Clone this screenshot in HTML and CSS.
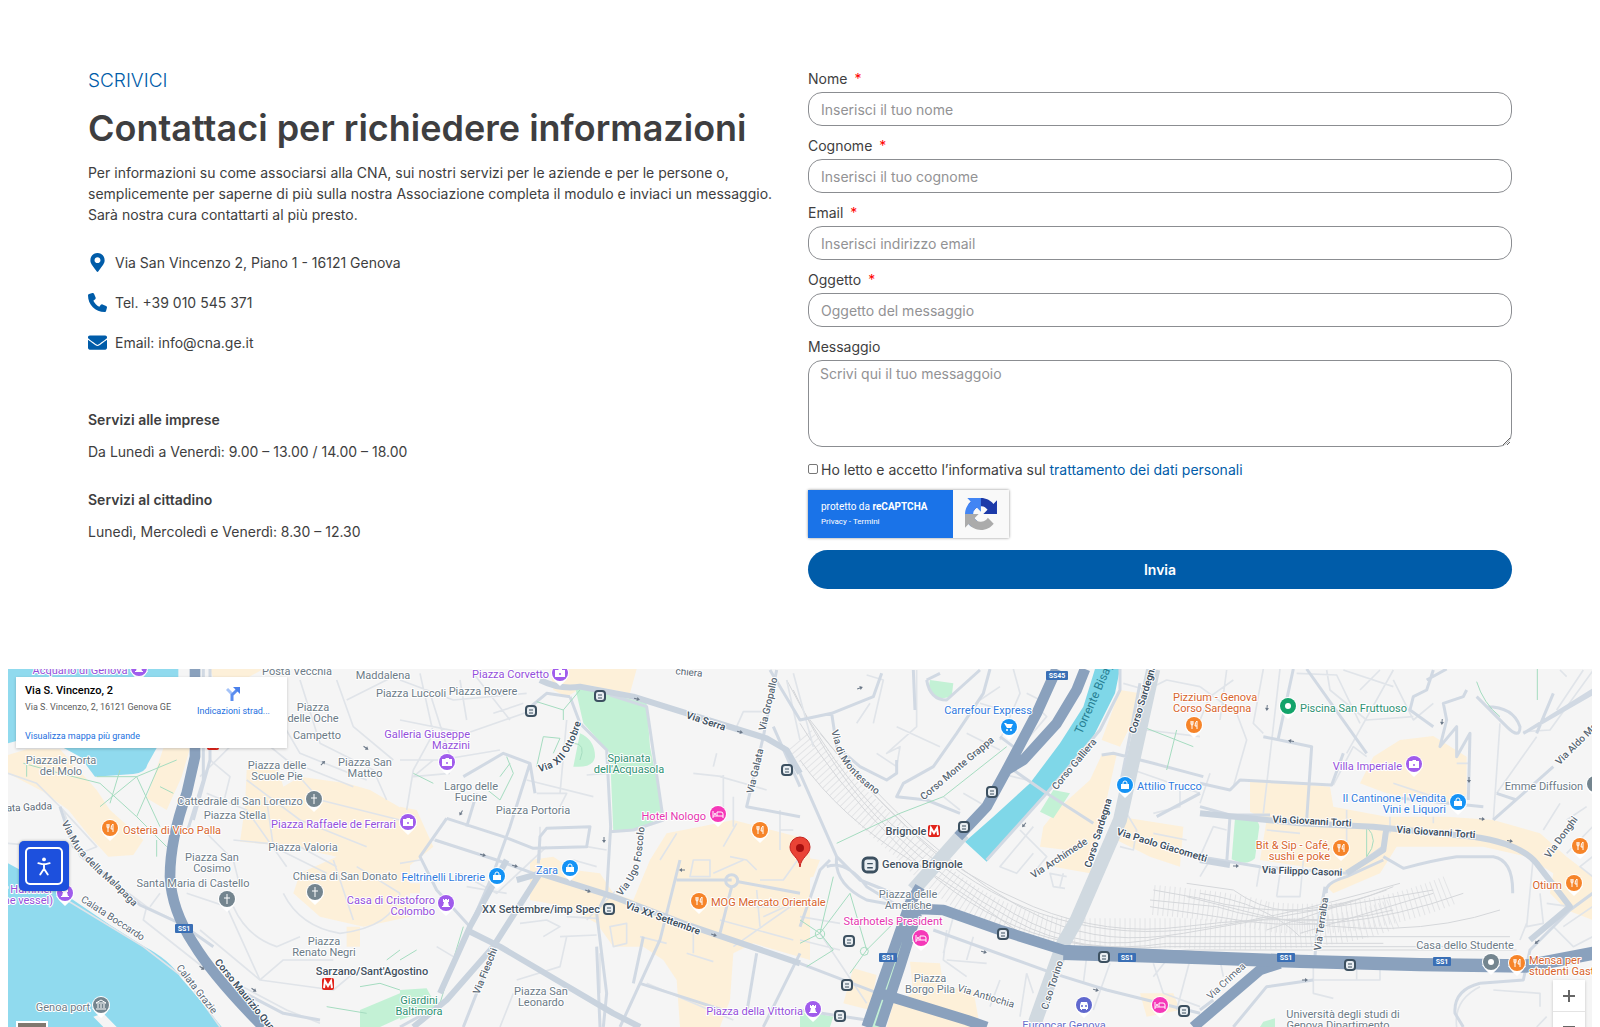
FILE: index.html
```html
<!DOCTYPE html>
<html lang="it">
<head>
<meta charset="utf-8">
<meta name="viewport" content="width=device-width, initial-scale=1">
<title>Contatti</title>
<link rel="stylesheet" href="styles.css">
</head>
<body>
<main class="contact">
  <section class="info">
    <p class="kicker">SCRIVICI</p>
    <h1 class="title">Contattaci per richiedere informazioni</h1>
    <p class="intro">Per informazioni su come associarsi alla CNA, sui nostri servizi per le aziende e per le persone o, semplicemente per saperne di più sulla nostra Associazione completa il modulo e inviaci un messaggio. Sarà nostra cura contattarti al più presto.</p>
    <ul class="contacts">
      <li><svg class="contact-icon" viewBox="-64 0 512 512" aria-hidden="true"><path d="M172.268 501.67C26.97 291.031 0 269.413 0 192 0 85.961 85.961 0 192 0s192 85.961 192 192c0 77.413-26.97 99.031-172.268 309.67-9.535 13.774-29.93 13.773-39.464 0zM192 272c44.183 0 80-35.817 80-80s-35.817-80-80-80-80 35.817-80 80 35.817 80 80 80z"/></svg><span>Via San Vincenzo 2, Piano 1 - 16121 Genova</span></li>
      <li><svg class="contact-icon" viewBox="0 0 512 512" aria-hidden="true"><path d="M164.9 24.6c-7.7-18.6-28-28.5-47.4-23.2l-88 24C12.1 30.2 0 46 0 64C0 311.4 200.6 512 448 512c18 0 33.8-12.1 38.6-29.5l24-88c5.3-19.4-4.6-39.7-23.2-47.4l-96-40c-16.3-6.8-35.2-2.1-46.3 11.6L304.7 368C234.3 334.7 177.3 277.7 144 207.3L193.3 167c13.7-11.2 18.4-30 11.6-46.3l-40-96z"/></svg><span>Tel. +39 010 545 371</span></li>
      <li><svg class="contact-icon" viewBox="0 0 512 512" aria-hidden="true"><path d="M502.3 190.8c3.9-3.1 9.7-.2 9.7 4.7V400c0 26.5-21.5 48-48 48H48c-26.5 0-48-21.5-48-48V195.6c0-5 5.7-7.8 9.7-4.7 22.4 17.4 52.1 39.5 154.1 113.6 21.1 15.4 56.7 47.8 92.2 47.6 35.7.3 72-32.8 92.3-47.6 102-74.1 131.6-96.3 154-113.7zM256 320c23.2.4 56.6-29.2 73.4-41.4 132.7-96.3 142.8-104.7 173.4-128.7 5.8-4.5 9.2-11.5 9.2-18.9v-19c0-26.5-21.5-48-48-48H48c-26.5 0-48 21.5-48 48v19c0 7.4 3.4 14.3 9.2 18.9 30.6 23.9 40.7 32.4 173.4 128.7 16.8 12.2 50.2 41.8 73.4 41.4z"/></svg><span>Email: info@cna.ge.it</span></li>
    </ul>
    <div class="hours">
      <h2>Servizi alle imprese</h2>
      <p>Da Lunedì a Venerdì: 9.00 – 13.00 / 14.00 – 18.00</p>
      <h2>Servizi al cittadino</h2>
      <p>Lunedì, Mercoledì e Venerdì: 8.30 – 12.30</p>
    </div>
  </section>

  <form class="form">
    <div class="field"><label class="required" for="nome">Nome</label><input id="nome" type="text" placeholder="Inserisci il tuo nome"></div>
    <div class="field"><label class="required" for="cognome">Cognome</label><input id="cognome" type="text" placeholder="Inserisci il tuo cognome"></div>
    <div class="field"><label class="required" for="email">Email</label><input id="email" type="email" placeholder="Inserisci indirizzo email"></div>
    <div class="field"><label class="required" for="oggetto">Oggetto</label><input id="oggetto" type="text" placeholder="Oggetto del messaggio"></div>
    <div class="field"><label for="messaggio">Messaggio</label><textarea id="messaggio" placeholder="Scrivi qui il tuo messaggoio"></textarea></div>
    <div class="consent"><input id="consenso" type="checkbox"><label for="consenso">Ho letto e accetto l’informativa sul <a href="#privacy">trattamento dei dati personali</a></label></div>
    <div class="captcha">
      <div class="captcha-text"><p>protetto da <strong>reCAPTCHA</strong></p><p class="captcha-links"><a href="#privacy">Privacy</a> - <a href="#termini">Termini</a></p></div>
      <div class="captcha-logo"><svg viewBox="0 0 64 64" aria-hidden="true"><path fill="#1c3aa9" d="M64 31.955l-.033-1.37V4.687l-7.16 7.16C50.948 4.674 42.033.093 32.05.093c-10.4 0-19.622 4.96-25.458 12.64l11.736 11.86a15.55 15.55 0 0 1 4.754-5.334c2.05-1.6 4.952-2.906 8.968-2.906.485 0 .86.057 1.135.163 4.976.393 9.288 3.14 11.828 7.124l-8.307 8.307L64 31.953"/><path fill="#4285f4" d="M31.862.094l-1.37.033H4.594l7.16 7.16C4.58 13.147 0 22.06 0 32.046c0 10.4 4.96 19.622 12.64 25.458L24.5 45.768a15.55 15.55 0 0 1-5.334-4.754c-1.6-2.05-2.906-4.952-2.906-8.968 0-.485.057-.86.163-1.135.393-4.976 3.14-9.288 7.124-11.828l8.307 8.307L31.86.095"/><path fill="#ababab" d="M.001 32.045l.033 1.37v25.898l7.16-7.16c5.86 7.173 14.774 11.754 24.76 11.754 10.4 0 19.622-4.96 25.458-12.64l-11.736-11.86a15.55 15.55 0 0 1-4.754 5.334c-2.05 1.6-4.952 2.906-8.968 2.906-.485 0-.86-.057-1.135-.163-4.976-.393-9.288-3.14-11.828-7.124l8.307-8.307c-10.522.04-22.4.066-31.295-.005"/></svg></div>
    </div>
    <button class="submit" type="submit">Invia</button>
  </form>
</main>

<section class="map" aria-label="Mappa">
<svg class="map-canvas" viewBox="8 669 1584 358" preserveAspectRatio="xMinYMin slice">
  <defs>
    <g id="pin"><path d="M-9 3Q-6 8 0 13Q6 8 9 3Z" fill="#fff"/><circle r="9" fill="#fff"/><circle r="8" fill="currentColor"/></g>
    <g id="food"><use href="#pin"/><path fill="none" stroke="#fff" d="M-3-4v3q0 1 1 1t1-1v-3M-2-4v8M3 4v-8q-2 1-2 5h2"/></g>
    <g id="camera"><use href="#pin"/><path fill="#fff" d="M-5-3h3l1-1h3v1h3v7H-5z"/><circle cy="1" r="1" fill="currentColor"/></g>
    <g id="tower"><use href="#pin"/><path fill="#fff" d="M-3-4h1v1h1v-1h2v1h1v-1h1v3h-1l1 4h1v1h-8v-1h1l1-4h-1z"/></g>
    <g id="bag"><use href="#pin"/><path fill="#fff" d="M-4-1h8v5h-8z"/><path fill="none" stroke="#fff" d="M-2-1v-1a2 2 0 0 1 4 0v1"/></g>
    <g id="cross"><use href="#pin"/><path stroke="#fff" d="M0-5V5M-3-1H3"/></g>
    <g id="bed"><use href="#pin"/><path fill="none" stroke="#fff" d="M-5-3v7M-5 2h10M5 4v-4q0-2-2-2h-4v4"/><circle cx="-3" cy="0" r="1" fill="#fff"/></g>
    <g id="dot"><use href="#pin"/><circle r="3" fill="#fff"/></g>
    <g id="cart"><use href="#pin"/><path fill="#fff" d="M-5-4h2l1 1h6l-2 4h-4z"/><circle cx="-2" cy="3" r="1" fill="#fff"/><circle cx="2" cy="3" r="1" fill="#fff"/></g>
    <g id="museum"><use href="#pin"/><path fill="none" stroke="#fff" d="M-5-2h10L0-5zM-3-1v4M0-1v4M3-1v4M-5 4H5"/></g>
    <g id="car"><use href="#pin"/><path fill="#fff" d="M-4 0l1-3h6l1 3v4h-1v1h-1v-1h-4v1h-1v-1h-1z"/><circle cx="-2" cy="1" r="1" fill="currentColor"/><circle cx="2" cy="1" r="1" fill="currentColor"/></g>
    <g id="station"><rect x="-5" y="-5" width="10" height="10" rx="3" fill="#e9eef2" stroke="#3c5060" stroke-width="2"/><path stroke="#3c5060" d="M-2-1H2M-2 2H2"/></g>
    <g id="metro"><rect x="-6" y="-6" width="12" height="12" rx="2" fill="#e2231a"/><path fill="none" stroke="#fff" stroke-width="2" d="M-4 4l1-7 3 5 3-5 1 7"/></g>
    <g id="ss1"><rect x="-9" y="-5" width="18" height="9" rx="1" fill="#3a6fb5"/><text class="shield">SS1</text></g>
    <path id="arrow" fill="#6b7888" d="M6 0L0-4v3h-6v2h6v3z"/>
    <path id="ottobre" d="M538 768Q559 764 566 748Q574 735 579 714"/>
    <path id="foscolo" d="M618 894Q637 872 638 850L641 822"/>
    <path id="mura" d="M65 821L78 846Q100 872 116 883L140 908"/>
    <path id="montesano" d="M835 730L841 751Q853 775 883 794"/>
  </defs>

  <g transform="scale(.33333) translate(0 1980)">
    <!-- commercial areas -->
    <g class="urban">
      <path d="M24 285L80 268H180L290 390 330 450 430 540 400 585 325 590 270 530 205 450 130 395 24 340ZM490 265H570L545 350 500 450 440 415ZM630 27H790L740 55H640ZM740 330L830 310 850 380 900 350 1040 370 1110 390 1230 460V770L1090 800 960 770 880 700 900 640 1010 590 880 560 720 545 735 440ZM1040 800H1080V860H1040Z"/>
      <g transform="translate(1200)"><path d="M450 27H710L690 100 560 75 500 110 460 90ZM0 440L50 450 100 560 0 640ZM390 600L460 590 520 630 600 640 640 700 700 720 750 600 800 520 900 500 1000 480 1230 540V900L1060 850 1000 880 990 1020 960 1101H840L830 960 790 900 730 860 640 860 590 790 500 740 390 720ZM0 670H60V700H0Z"/></g>
      <g transform="translate(2400)"><path d="M0 590L60 600 40 650 0 660ZM960 90L1020 100 990 200 960 260 905 240ZM905 285L950 285 870 640 760 620 800 570 720 560 730 500 770 450 870 360ZM960 470L1150 500 1140 620 1050 590 950 540ZM330 905L420 910 430 980 520 990 540 1101H260L280 1030 340 1000ZM160 925L230 945 210 1050 130 1030ZM1020 1000H1120L1140 1050 1040 1070Z"/></g>
      <g transform="translate(3600)"><path d="M150 360L390 380 400 440 560 470H740L880 480 1020 520 1100 590 1178 650V780L1100 750 1050 700 1060 640 980 590 850 560 590 560 540 640 400 700 380 680 440 640 180 600 200 480 150 455ZM520 290L600 240 700 228 800 290 800 400 780 440 560 400 480 370Z"/></g>
    </g>
    <!-- water -->
    <path class="water" d="M24 27H535V60H24ZM24 50H60V240L24 250ZM175 255L240 290 285 350 400 342Q438 338 443 312L475 255ZM24 610L190 700 330 795 430 858Q510 900 540 950L600 1020 665 1101H350L310 1060 280 1070 310 1101H24Z"/>
    <g transform="translate(2400)"><path class="river" d="M885 27H960L945 100 880 230 720 420 560 605 495 545 580 470 690 370 780 250 850 140Z"/></g>
    <!-- parks -->
    <g class="park">
      <path d="M1080 1050L1200 1000 1230 1060 1140 1101H1080Z"/>
      <g transform="translate(1200)"><path d="M525 80L620 100 740 130 750 260 790 460 740 500 640 517 630 280 550 190ZM540 220Q585 240 585 290 580 325 520 320ZM0 990L80 985 110 1040 0 1080Z"/></g>
      <g transform="translate(2400)"><path d="M390 60L460 70 455 110 410 118 385 90ZM760 390L810 400 760 475 720 455ZM290 800L330 810 240 1101H215ZM0 1050L100 1070 90 1101H0Z"/></g>
      <g transform="translate(3600)"><path d="M105 475Q175 465 178 500L165 595Q140 620 95 598ZM190 1085L225 1075V1101H180Z"/></g>
    </g>
    <!-- railway yards -->
    <g class="ties"><path d="M2400 240Q2560 430 2720 560Q2950 810 3230 820H3560Q4000 840 4180 760"/><path d="M3460 720Q3700 740 3800 770Q4080 800 4350 690"/></g>
    <g class="rail" transform="translate(2400)"><path d="M-40 60Q100 330 260 480T640 760 1100 830H1700M-20 90Q100 350 270 510T640 780 1100 850H1750M0 190Q100 360 280 540T650 800 1100 860H2000M30 180Q160 350 320 500T700 740 1150 800 1600 780M60 220Q180 370 350 530T720 760 1150 810 1800 670M100 240Q200 380 380 540T740 780 1150 820 1900 690M0 300Q120 470 330 600T660 820 1160 870H2150M1060 690L1200 715Q1500 800 1780 680M1050 720L1250 740Q1500 820 1780 750M1050 740L1250 770Q1600 840 1990 700M1160 670L1300 690Q1450 800 1660 720M1160 710L1400 770Q1800 850 2100 750M1200 700Q1400 730 1500 830H2130M1400 810L1760 690M1500 820L1900 700"/></g>
    <!-- small streets -->
    <g class="lane">
      <path d="M24 340L110 370 190 450 240 590 440 740 540 790M440 740L430 780 620 930M180 440L290 560 240 580M600 350L700 250 760 60M620 400L740 450 860 620M630 300L690 350 670 430M600 500L700 600 720 680M700 170L860 300 1060 380M740 360L900 480 1100 560M830 160L900 280 1100 360M900 60L960 250 1120 330 1160 420M1010 60L1060 200 1180 300M1040 120L1200 40M880 330L960 420 1200 480M800 420L820 560 980 640M700 540L900 560 1010 620M560 700L680 740 780 960 850 900 1000 900M600 810L780 960 1000 990 1060 940M850 700Q900 800 1020 820 1180 800 1200 700M700 740Q740 830 830 860L900 830M1000 600L1060 780M1070 620L1200 700M660 1101L560 960 430 860 200 720M690 960L860 1050 960 1090M24 550L140 560M480 700L450 740"/>
      <g transform="translate(1200)"><path d="M0 60L160 120 380 100M0 180L200 220 400 150M60 40L100 220 40 330 20 450M180 60L200 180M220 40L330 180M0 300L120 300 300 270M90 100L160 320M280 160L370 130M100 300L40 350 150 340M410 400H500L480 440M480 400L500 180M380 360L580 410M560 345L620 340M100 540L260 590M180 640L290 700 440 560M320 700L200 680M420 500V600M560 560L620 570M500 770L590 775M480 830L590 825M350 960L480 920 500 830M360 790L440 780 480 800 430 830M630 800L640 860 680 850 680 790ZM600 880V1000M740 970L1000 1080M860 880L940 905M880 820V880M960 780L1180 840M1000 860L1200 720M940 640L1030 600M880 600H930V650H870ZM990 590L1040 600 1070 630M1010 490L970 560M1000 410V500M880 340L970 350M970 345V450M960 350L1100 390M950 280L940 320M830 520L780 600M60 600L0 610M110 860L160 890M300 1101L340 1000M590 620L520 600M560 780L650 690M720 830L800 850M1200 590L1150 660 1080 660M1140 450V570M1140 510H1180M1010 200L1030 155H1090M1160 60L1200 240M1180 40L1240 260M1070 690L1080 800M1090 770L1200 720M1060 740H1140"/></g>
      <g transform="translate(2400)"><path d="M200 45L250 60 220 190M170 190L210 130M350 30V200L260 280 300 260 290 320 230 280M640 27L660 100 600 240M680 100L740 130M640 160L540 130M290 200L420 260M430 410L480 450M680 360L600 340M490 400L560 440M700 500L600 620 650 640 700 580M660 510L740 590 700 640M800 650L750 640 760 680 795 685M970 70L1040 90 1100 60 1200 80M1040 210L1200 230M1000 330L1200 400M1060 460L1140 440 1140 370M960 560L1000 570 1010 510 980 460M1060 520L1160 540M440 810L430 900 500 950M440 900L560 910M600 960L570 1040M680 940L660 1070M520 830L500 900M460 770L430 880M860 890L850 970M930 910L880 1050M1060 950L1100 900M1170 900L1130 1050M1060 910L1090 1000 1200 1040M0 840L120 870M60 820L200 1030M0 770L120 790M700 1000L680 940M720 150L740 170 680 240M600 80L540 120M500 220L600 270M780 680L790 640"/></g>
      <g transform="translate(3600)"><path d="M0 80L110 160 140 240 100 380M80 30L60 180M190 27L160 190 190 220M240 27L190 460M290 40L410 45 480 190M380 30L390 90 500 180 640 170M540 30L480 90M580 60L640 180 700 130M430 30L580 80M900 190L880 480M1010 230L890 400M1080 30L1100 50M1180 30L1050 210 970 215M1150 30L1070 150M1080 430L1030 510M1160 440L1100 480M1000 590L980 800 1030 790 1020 700M980 790L960 840M1060 800L1120 860 1178 830M1040 730L1110 740M1090 800L1178 740M440 450V560M570 470V520M700 470V490M200 510L300 520M0 590L40 500 80 510M230 710H300L310 600M240 640L230 710M180 620L170 680M60 900L70 950M0 650L30 600M340 960H540V930M340 900V1000L400 1015M470 930V960M400 375L460 260 500 290M440 280L580 30M580 370L700 410M770 310H810M840 980Q760 1020 770 1101M880 990L1020 1000V1040M1040 1070L1010 1101M0 180L30 110 100 60M0 430L30 340M1178 590L1140 620 1178 650M1100 580L1178 500"/></g>
    </g>
    <!-- streets -->
    <g class="street">
      <path d="M610 27V360L560 520M630 27V300L580 480M180 440L220 560 420 735 540 790 640 860M640 950L850 1060 960 1080"/>
      <g transform="translate(1200)"><path d="M510 110L540 190 620 270 632 500 620 700 590 760 620 1000 610 1101M190 350L310 280 390 310 405 400M390 310L330 500 280 640 210 800M140 475L310 530 400 565 560 560 570 500 440 505 420 530 415 610M140 475L60 590 110 690 210 800M105 540L290 600 400 640M630 515L700 510 790 480 740 140 630 105M1200 470L1040 440 1090 230 1130 30M1090 230L1150 260 1200 340M840 600L780 840 660 1101M995 660H830M995 680L960 820M1015 665L1200 700M1200 380L1120 200M1200 880L1090 1101M730 830L700 970M1070 880L1040 1060M200 500L230 400M380 150L440 100 510 110M0 1101L130 1030M590 860L600 1101M190 1101L285 860M720 970L1000 1060"/><circle cx="995" cy="662" r="18"/></g>
      <g transform="translate(2400)"><path d="M-90 30L0 180 95 160 110 260 180 320 260 360 290 340 290 300M95 160L220 110 245 40M340 30L345 150M570 27L550 100 470 220 400 320 310 370 290 410 380 420 480 460M380 60Q390 120 440 120L540 30M380 60L420 40M960 27V90L900 210 740 400 560 600M640 260L600 230M0 340L110 590 180 660 330 720M90 600L60 630 0 800M80 620Q140 600 200 680L330 760M110 590Q100 670 200 720L310 740M640 330L740 400 880 490M905 285L940 280 1060 310 1210 350M1200 400L1070 470M400 810L760 940 920 990 1200 1060M0 910L260 1010M0 1050L200 1080M960 380L1020 70"/></g>
      <g transform="translate(3600)"><path d="M320 27L500 280M280 27L235 235M190 230L335 260 320 480M0 370L90 390 120 360 395 375 430 280M700 30L680 90 640 110 630 150 700 200M800 90L790 110 730 130 740 180 720 260 770 200 770 290 810 220 805 420M880 480L1060 320M740 27L680 60M970 220L1180 100M830 110L920 200Q960 240 960 200 940 140 860 140M1010 220L1060 100M550 590L610 625Q700 600 770 590H880Q940 600 938 700M380 700Q370 670 440 650L550 600M345 890L350 820 375 680M0 590L180 620 440 640 550 560 555 500M90 470L80 610M90 465H210M0 440L90 465M1178 90L970 220M890 400L950 420M850 440L560 410M840 970Q760 990 765 1060L790 1101M840 970L970 960 990 870 1110 750M100 1101L200 980 340 960 M0 1050L40 1020M1110 750L1178 700"/></g>
    </g>
    <!-- footpaths -->
    <g class="path">
      <path d="M70 310L180 340 300 370 410 470 500 560M290 350L410 350 530 300M410 350L300 440M360 330L330 430M410 350L480 500M480 310L410 470M480 380L520 400M470 540V590M80 310V350M1080 980L1140 970 1200 990M980 1040L1100 1060M1200 870L1160 900"/>
      <g transform="translate(1200)"><path d="M410 125L490 150 540 90M490 150V180M410 320L430 230 480 235 460 280M320 290L340 340 300 420 250 380M330 310L300 350M520 250Q560 250 540 300M190 800L120 1030M40 340L100 370M0 900L50 870"/></g>
      <g transform="translate(2400)"><path d="M0 780L60 820 100 870 20 920M60 820L150 700 200 870M60 820L0 850M200 870L150 940M200 870L280 790M100 650L60 820M110 550L300 460 430 410 620 260M1040 205L1180 260M1130 210L1100 330"/><circle cx="60" cy="822" r="14"/><circle cx="193" cy="874" r="12"/></g>
      <g transform="translate(3600)"><path d="M1012 27V120M830 65Q850 130 900 170M500 500Q540 540 500 590V500"/></g>
    </g>
    <!-- avenues -->
    <g class="avenue">
      <path d="M1620 60Q1680 90 1740 80L1900 110 2300 235 2360 270 2400 340"/>
      <path d="M1550 660L1620 640 1840 710 2050 790 2400 910M1620 640L1480 860 1340 1020 1240 1101M1400 810L1500 860 1840 1060 1920 1101M1520 600L1410 800 1320 1000"/>
      <path d="M3600 460L3900 490 4120 500 4420 530Q4560 550 4610 610L4710 740 4590 840M4160 500L4150 570 4040 640M3600 600L3690 615"/>
    </g>
    <g class="boulevard"><path d="M3460 27L3360 480 3230 780 3190 850 3100 1101"/><path d="M2890 520L2740 690"/></g>
    <!-- highways -->
    <g class="highway">
      <path d="M585 27V290L560 400Q510 540 510 650Q515 750 580 850Q640 950 790 1101"/>
      <path d="M3170 27L3110 160 3020 330 2960 440 2875 530M3255 27L3230 90 3170 190 3070 300 3020 330M2760 680L2730 730 2600 1101M2750 760L2700 920 2640 1101M2720 745L2830 750 3000 810 3190 870 3600 890M2640 1000L2900 1080 2960 1101M3840 910L3780 930 3580 1101"/>
      <path class="wide" d="M3190 880L3600 893 3900 904 4260 914 4580 918 4780 880"/>
    </g>
  </g>

  <g class="arrows">
    <use href="#arrow" transform="translate(366 748) rotate(35) scale(.5)"/><use href="#arrow" transform="translate(323 763) rotate(-45) scale(.5)"/><use href="#arrow" transform="translate(202 968) rotate(35) scale(.5)"/><use href="#arrow" transform="translate(254 990) rotate(35) scale(.5)"/><use href="#arrow" transform="translate(637 699) rotate(15) scale(.5)"/><use href="#arrow" transform="translate(740 732) rotate(15) scale(.5)"/><use href="#arrow" transform="translate(515 866) rotate(15) scale(.5)"/><use href="#arrow" transform="translate(588 891) rotate(20) scale(.5)"/><use href="#arrow" transform="translate(483 855) rotate(15) scale(.5)"/><use href="#arrow" transform="translate(604 840) rotate(90) scale(.5)"/><use href="#arrow" transform="translate(461 813) rotate(120) scale(.5)"/><use href="#arrow" transform="translate(714 935) rotate(18) scale(.5)"/><use href="#arrow" transform="translate(682 870) rotate(180) scale(.5)"/><use href="#arrow" transform="translate(860 688) rotate(-20) scale(.5)"/><use href="#arrow" transform="translate(984 952) rotate(16) scale(.5)"/><use href="#arrow" transform="translate(1096 990) rotate(16) scale(.5)"/><use href="#arrow" transform="translate(1024 825) rotate(130) scale(.5)"/><use href="#arrow" transform="translate(1291 741) rotate(190) scale(.5)"/><use href="#arrow" transform="translate(1267 708) rotate(95) scale(.5)"/><use href="#arrow" transform="translate(1442 722) rotate(95) scale(.5)"/><use href="#arrow" transform="translate(1469 780) rotate(90) scale(.5)"/><use href="#arrow" transform="translate(1482 819) rotate(5) scale(.5)"/><use href="#arrow" transform="translate(1510 841) rotate(10) scale(.5)"/><use href="#arrow" transform="translate(1236 866) scale(.5)"/><use href="#arrow" transform="translate(1305 980) scale(.5)"/><use href="#arrow" transform="translate(1537 942) rotate(140) scale(.5)"/>
  </g>

  <g class="labels">
    <g class="place">
      <text x="297" y="671">Posta Vecchia</text><text x="313" y="707">Piazza</text><text x="313" y="718">delle Oche</text><text x="317" y="735">Campetto</text>
      <text x="61" y="760">Piazzale Porta</text><text x="61" y="771">del Molo</text><text x="212" y="857">Piazza San</text><text x="212" y="868">Cosimo</text>
      <text x="193" y="883">Santa Maria di Castello</text><text x="277" y="765">Piazza delle</text><text x="277" y="776">Scuole Pie</text><text x="365" y="762">Piazza San</text><text x="365" y="773">Matteo</text>
      <text x="240" y="801">Cattedrale di San Lorenzo</text><text x="235" y="815">Piazza Stella</text><text x="303" y="847">Piazza Valoria</text><text x="345" y="876">Chiesa di San Donato</text>
      <text x="324" y="941">Piazza</text><text x="324" y="952">Renato Negri</text><text x="63" y="1007">Genoa port</text><text x="383" y="675">Maddalena</text><text x="411" y="693">Piazza Luccoli</text><text x="483" y="691">Piazza Rovere</text>
      <text x="471" y="786">Largo delle</text><text x="471" y="797">Fucine</text><text x="533" y="810">Piazza Portoria</text><text x="541" y="991">Piazza San</text><text x="541" y="1002">Leonardo</text>
      <text x="908" y="894">Piazza delle</text><text x="908" y="905">Americhe</text><text x="930" y="978">Piazza</text><text x="930" y="989">Borgo Pila</text>
      <text x="1544" y="786">Emme Diffusion</text><text x="1465" y="945">Casa dello Studente</text><text x="1343" y="1014">Università degli studi di</text><text x="1338" y="1025">Genova Dipartimento</text>
    </g>
    <g class="place violet">
      <text x="80" y="670">Acquario di Genova</text><text class="end" x="53" y="889">r Hammer</text><text class="end" x="53" y="900">he vessel)</text><text class="end" x="396" y="824">Piazza Raffaele de Ferrari</text>
      <text class="end" x="435" y="900">Casa di Cristoforo</text><text class="end" x="435" y="911">Colombo</text><text class="end" x="549" y="674">Piazza Corvetto</text><text class="end" x="470" y="734">Galleria Giuseppe</text><text class="end" x="470" y="745">Mazzini</text>
      <text class="end" x="803" y="1011">Piazza della Vittoria</text><text class="end" x="1402" y="766">Villa Imperiale</text>
    </g>
    <g class="place orange">
      <text class="start" x="123" y="830">Osteria di Vico Palla</text><text class="start" x="711" y="902">MOG Mercato Orientale</text><text class="start" x="1173" y="697">Pizzium - Genova</text><text class="start" x="1173" y="708">Corso Sardegna</text>
      <text class="end" x="1330" y="845">Bit &amp; Sip - Café,</text><text class="end" x="1330" y="856">sushi e poke</text><text class="end" x="1562" y="885">Otium</text><text class="start" x="1529" y="960">Mensa per</text><text class="start" x="1529" y="971">studenti Gastr</text>
    </g>
    <g class="place green"><text x="629" y="758">Spianata</text><text x="629" y="769">dell'Acquasola</text><text x="419" y="1000">Giardini</text><text x="419" y="1011">Baltimora</text><text class="start" x="1300" y="708">Piscina San Fruttuoso</text></g>
    <g class="place pink"><text class="end" x="706" y="816">Hotel Nologo</text><text x="893" y="921">Starhotels President</text></g>
    <g class="place blue"><text class="end" x="485" y="877">Feltrinelli Librerie</text><text class="end" x="558" y="870">Zara</text><text x="988" y="710">Carrefour Express</text><text class="start" x="1137" y="786">Attilio Trucco</text><text class="end" x="1446" y="798">Il Cantinone | Vendita</text><text class="end" x="1446" y="809">Vini e Liquori</text></g>
    <g class="place indigo"><text x="1064" y="1025">Europcar Genova</text></g>
    <g class="place station-name"><text x="372" y="971">Sarzano/Sant'Agostino</text><text class="end" x="600" y="909">XX Settembre/imp Spec</text><text x="906" y="831">Brignole</text><text class="start" x="882" y="864">Genova Brignole</text></g>
    <g class="road minor">
      <text transform="translate(28 807) rotate(-3)">lata Gadda</text><text transform="translate(113 918) rotate(33)">Calata Boccardo</text><text transform="translate(197 989) rotate(52)">Calata Grazie</text>
      <text transform="translate(689 672) rotate(5)">chiera</text><text transform="translate(986 996) rotate(17)">Via Antiochia</text><text transform="translate(1226 981) rotate(-43)">Via Crimea</text>
    </g>
    <g class="road">
      <text class="start"><textPath href="#mura">Via Mura della Malapaga</textPath></text><text class="start"><textPath href="#foscolo">Via Ugo Foscolo</textPath></text><text class="start"><textPath href="#montesano">Via di Montesano</textPath></text>
      <text transform="translate(768 704) rotate(-77)">Via Gropallo</text><text transform="translate(755 771) rotate(-77)">Via Galata</text><text transform="translate(485 971) rotate(-68)">Via Fieschi</text>
      <text transform="translate(957 768) rotate(-40)">Corso Monte Grappa</text><text transform="translate(1074 764) rotate(-50)">Corso Galliera</text><text transform="translate(1059 858) rotate(-33)">Via Archimede</text>
      <text transform="translate(1052 985) rotate(-72)">C.so Torino</text><text transform="translate(1561 837) rotate(-54)">Via Donghi</text><text transform="translate(1321 924) rotate(-82)">Via Terralba</text>
      <text class="start" transform="translate(1557 763) rotate(-45)">Via Aldo Manuzio</text>
    </g>
    <g class="road major">
      <text class="start"><textPath href="#ottobre">Via XII Ottobre</textPath></text><text class="start" transform="translate(217 960) rotate(51)">Corso Maurizio Quadrio</text>
      <text transform="translate(663 918) rotate(20)">Via XX Settembre</text><text transform="translate(706 721) rotate(18)">Via Serra</text>
      <text class="start" transform="translate(1132 733) rotate(-73)">Corso Sardegna</text><text transform="translate(1098 833) rotate(-73)">Corso Sardegna</text><text transform="translate(1162 845) rotate(17)">Via Paolo Giacometti</text>
      <text transform="translate(1312 821) rotate(3)">Via Giovanni Torti</text><text transform="translate(1436 832) rotate(4)">Via Giovanni Torti</text><text transform="translate(1302 871) rotate(2)">Via Filippo Casoni</text>
    </g>
    <text class="river-name" transform="translate(1078 733) rotate(-66)">Torrente Bisagno</text>
  </g>

  <g class="shields">
    <use href="#ss1" x="184" y="929"/><use href="#ss1" x="888" y="958"/><use href="#ss1" x="1127" y="958"/><use href="#ss1" x="1286" y="958"/><use href="#ss1" x="1442" y="962"/>
    <rect x="1046" y="671" width="22" height="9" rx="1" fill="#3a6fb5"/><text class="shield" x="1057" y="676">SS45</text>
  </g>
  <g class="stops">
    <use href="#station" x="531" y="711"/><use href="#station" x="600" y="696"/><use href="#station" x="787" y="770"/><use href="#station" x="609" y="909"/><use href="#station" x="992" y="792"/><use href="#station" x="964" y="827"/><use href="#station" x="1003" y="934"/><use href="#station" x="849" y="941"/><use href="#station" x="847" y="985"/><use href="#station" x="840" y="1016"/><use href="#station" x="1104" y="957"/><use href="#station" x="1184" y="1011"/><use href="#station" x="1350" y="965"/>
    <use href="#station" transform="translate(870 865) scale(1.4)"/>
    <use href="#metro" x="328" y="984"/><use href="#metro" x="934" y="831"/><use href="#metro" x="213" y="744"/>
  </g>

  <g class="pin-violet"><use href="#tower" x="139" y="668"/><use href="#tower" x="65" y="893"/><use href="#camera" x="408" y="822"/><use href="#tower" x="446" y="903"/><use href="#camera" x="560" y="673"/><use href="#camera" x="447" y="762"/><use href="#tower" x="813" y="1009"/><use href="#camera" x="1414" y="764"/></g>
  <g class="pin-orange"><use href="#food" x="110" y="828"/><use href="#food" x="760" y="830"/><use href="#food" x="699" y="901"/><use href="#food" x="1194" y="725"/><use href="#food" x="1341" y="848"/><use href="#food" x="1580" y="846"/><use href="#food" x="1574" y="883"/><use href="#food" x="1517" y="963"/></g>
  <g class="pin-slate"><use href="#cross" x="314" y="799"/><use href="#cross" x="315" y="892"/><use href="#cross" x="227" y="899"/><use href="#museum" x="101" y="1005"/><use href="#dot" x="1491" y="962"/><use href="#dot" x="1595" y="784"/></g>
  <g class="pin-pink"><use href="#bed" x="718" y="814"/><use href="#bed" x="921" y="938"/><use href="#bed" x="1160" y="1005"/></g>
  <g class="pin-blue"><use href="#bag" x="497" y="876"/><use href="#bag" x="570" y="868"/><use href="#cart" x="1009" y="727"/><use href="#bag" x="1125" y="785"/><use href="#bag" x="1458" y="802"/></g>
  <g class="pin-indigo"><use href="#car" x="1084" y="1005"/></g>
  <g class="pin-green"><use href="#dot" x="1288" y="706"/></g>
  <path d="M800 867C799 857 790 855 790 847a10 10 0 0 1 20 0c0 8-9 10-10 20z" fill="#ea4335" stroke="#c5221f"/><circle cx="800" cy="848" r="4" fill="#a50e0e"/>
</svg>

  <aside class="map-card">
    <div class="map-card-text">
      <strong>Via S. Vincenzo, 2</strong>
      <span>Via S. Vincenzo, 2, 16121 Genova GE</span>
      <a href="#mappa">Visualizza mappa più grande</a>
    </div>
    <a class="directions" href="#indicazioni"><svg viewBox="0 0 14 14" aria-hidden="true"><path d="M1 2l5 5" fill="none" stroke="#a5c3f8" stroke-width="3"/><path d="M6 14V8l5-5" fill="none" stroke="#5b8def" stroke-width="3"/><path d="M7 0h7v7z" fill="#4a80ea"/></svg><span>Indicazioni strad...</span></a>
  </aside>
  <div class="zoom"><button type="button" aria-label="Zoom avanti"><svg viewBox="0 0 14 14"><path d="M7 1v12M1 7h12"/></svg></button><button type="button" aria-label="Zoom indietro"><svg viewBox="0 0 14 14"><path d="M1 7h12"/></svg></button></div>
  <button class="map-type" type="button" aria-label="Vista satellite"></button>
</section>

<button class="a11y" type="button" aria-label="Accessibilità"><svg viewBox="0 0 36 36" aria-hidden="true"><circle cx="18" cy="11" r="2" fill="#fff"/><path d="M12 15l4 1h4l4-1M18 17v4M18 21l-4 6M18 21l4 6" fill="none" stroke="#fff" stroke-width="2" stroke-linecap="round"/></svg></button>
</body>
</html>
```
FILE: styles.css
```css
* { box-sizing: border-box; }
body {
  margin: 0;
  height: 100vh;
  display: flex;
  flex-direction: column;
  position: relative;
  background: #fff;
  color: #3e3e40;
  font: 14px/21px Inter, "Liberation Sans", sans-serif;
}
p, h1, h2, ul { margin: 0; padding: 0; }
a { color: #005ca9; text-decoration: none; }

.contact {
  flex: none;
  display: grid;
  grid-template-columns: 1fr 1fr;
  gap: 16px;
  padding: 69px 88px 80px;
}
.kicker { color: #005ca9; font-size: 19px; line-height: 24px; font-weight: 300; }
.title { margin-top: 12px; font-size: 36px; line-height: 46px; font-weight: 600; }
.intro { margin-top: 11px; }
.contacts { margin-top: 27px; list-style: none; display: grid; gap: 19px; }
.contacts li { display: flex; align-items: center; gap: 8px; }
.contact-icon { width: 19px; height: 19px; fill: #005ca9; }
.hours { margin-top: 56px; }
.hours h2 { font-size: 14px; line-height: 21px; font-weight: 600; }
.hours p { margin-top: 11px; margin-bottom: 27px; }
.hours p:last-child { margin-bottom: 0; }

.form { display: flex; flex-direction: column; gap: 10px; }
.field { display: flex; flex-direction: column; gap: 3px; }
.field label { line-height: 20px; }
.required::after { content: "*"; color: #f00; margin-left: 7px; }
.field input, .field textarea {
  width: 100%;
  height: 34px;
  padding: 0 12px;
  border: 1px solid #8b8d91;
  border-radius: 14px;
  background: #fff;
  color: #3e3e40;
  font: inherit;
}
.field textarea { display: block; height: 87px; padding: 2px 11px; resize: vertical; }
::placeholder { color: #929294; opacity: 1; }
.consent { display: flex; align-items: flex-start; gap: 3px; margin-top: 3px; line-height: 20px; }
.consent input { appearance: none; width: 10px; height: 10px; margin: 4px 0 0; border: 1px solid #777; border-radius: 2px; background: #fff; }
.captcha { display: flex; width: 201px; height: 48px; box-shadow: 0 0 3px #888; border-radius: 1px; font-family: Roboto, sans-serif; }
.captcha-text { flex: 1; background: #1a73e8; color: #fff; padding: 9px 0 0 13px; font-size: 10px; line-height: 16px; }
.captcha-text a { color: #fff; }
.captcha-links { font-size: 8px; line-height: 14px; }
.captcha-logo { width: 56px; background: #f9f9f9; display: grid; place-items: center; }
.captcha-logo svg { width: 32px; height: 32px; }
.submit { height: 39px; margin-top: 2px; border: 0; border-radius: 20px; background: #005ca9; color: #fff; font: 600 14px/21px Inter, sans-serif; }

.map { flex: 1; min-height: 0; margin: 0 8px; position: relative; overflow: hidden; background: #f5f5f5; font-family: Roboto, sans-serif; }
.map-canvas { display: block; width: 100%; height: 100%; }
.urban { fill: #fdf0d9; }
.water { fill: #90daee; }
.river { fill: #7fd7e8; }
.park { fill: #c3f1d5; }
.lane, .street, .avenue, .boulevard, .highway, .path, .rail, .ties { fill: none; stroke-linejoin: round; }
.lane { stroke: #e0e4e9; stroke-width: 5; }
.street { stroke: #d1d9e3; stroke-width: 9; }
.path { stroke: #a5dcc0; stroke-width: 3; }
.avenue { stroke: #c9d3de; stroke-width: 18; }
.boulevard { stroke: #d0d9e0; stroke-width: 42; }
.highway { stroke: #8aa1bd; stroke-width: 32; }
.highway .wide { stroke-width: 40; }
.rail { stroke: #d5d7da; stroke-width: 3; }
.ties { stroke: #e3e4e6; stroke-width: 90; stroke-dasharray: 3 12; }

.labels text { dominant-baseline: central; text-anchor: middle; paint-order: stroke; stroke: #fff; stroke-width: 2px; stroke-linejoin: round; }
.labels .start { text-anchor: start; }
.labels .end { text-anchor: end; }
.place { font-size: 11px; fill: #6c7b87; }
.violet { fill: #944fdb; }
.orange { fill: #d8652d; }
.green { fill: #2e9173; }
.pink { fill: #e536b0; }
.blue { fill: #2f7be0; }
.indigo { fill: #6870cc; }
.station-name { fill: #43525f; font-weight: 500; }
.road { font-size: 10px; fill: #596774; font-weight: 500; }
.minor { font-weight: 400; }
.major { fill: #40505f; font-weight: 600; }
.labels .river-name { font-size: 12px; fill: #277f93; stroke: none; text-anchor: start; }
.shield { font-size: 7px; font-weight: 700; fill: #fff; text-anchor: middle; dominant-baseline: central; }
.pin-violet { color: #a05cec; }
.pin-orange { color: #f68429; }
.pin-slate { color: #74858f; }
.pin-pink { color: #f538b8; }
.pin-blue { color: #1593f5; }
.pin-indigo { color: #6068ce; }
.pin-green { color: #12a36a; }

.map-card { position: absolute; left: 8px; top: 8px; width: 271px; height: 71px; display: flex; justify-content: space-between; padding: 7px 17px 6px 9px; background: #fff; box-shadow: 0 1px 3px #0003; font-size: 9px; line-height: 12px; }
.map-card-text { display: flex; flex-direction: column; }
.map-card strong { color: #000; font-size: 11px; line-height: 13px; font-weight: 500; }
.map-card span { color: #5b5b5b; margin-top: 4px; }
.map-card a { color: #1a6fe0; }
.map-card-text a { margin-top: auto; }
.directions { display: flex; flex-direction: column; align-items: center; padding-top: 3px; }
.directions svg { width: 14px; height: 14px; }
.map-card .directions span { color: #1a6fe0; }
.zoom { position: absolute; right: 7px; top: 311px; width: 32px; background: #fff; box-shadow: 0 1px 3px #0003; }
.zoom button { display: grid; place-items: center; width: 100%; height: 31px; padding: 0; border: 0; background: none; }
.zoom button + button { border-top: 1px solid #e4e4e4; }
.zoom svg { width: 14px; height: 14px; stroke: #666; stroke-width: 2; }
.map-type { position: absolute; left: 8px; top: 352px; width: 32px; height: 32px; padding: 0; border: 2px solid #fff; background: #80786f; }
.a11y { position: absolute; left: 19px; top: 841px; width: 50px; height: 50px; padding: 6px; border: 0; border-radius: 5px; background: #1d50dd; box-shadow: 0 0 3px #0005; }
.a11y svg { display: block; width: 38px; height: 38px; border: 2px solid #fff; border-radius: 5px; }
```
